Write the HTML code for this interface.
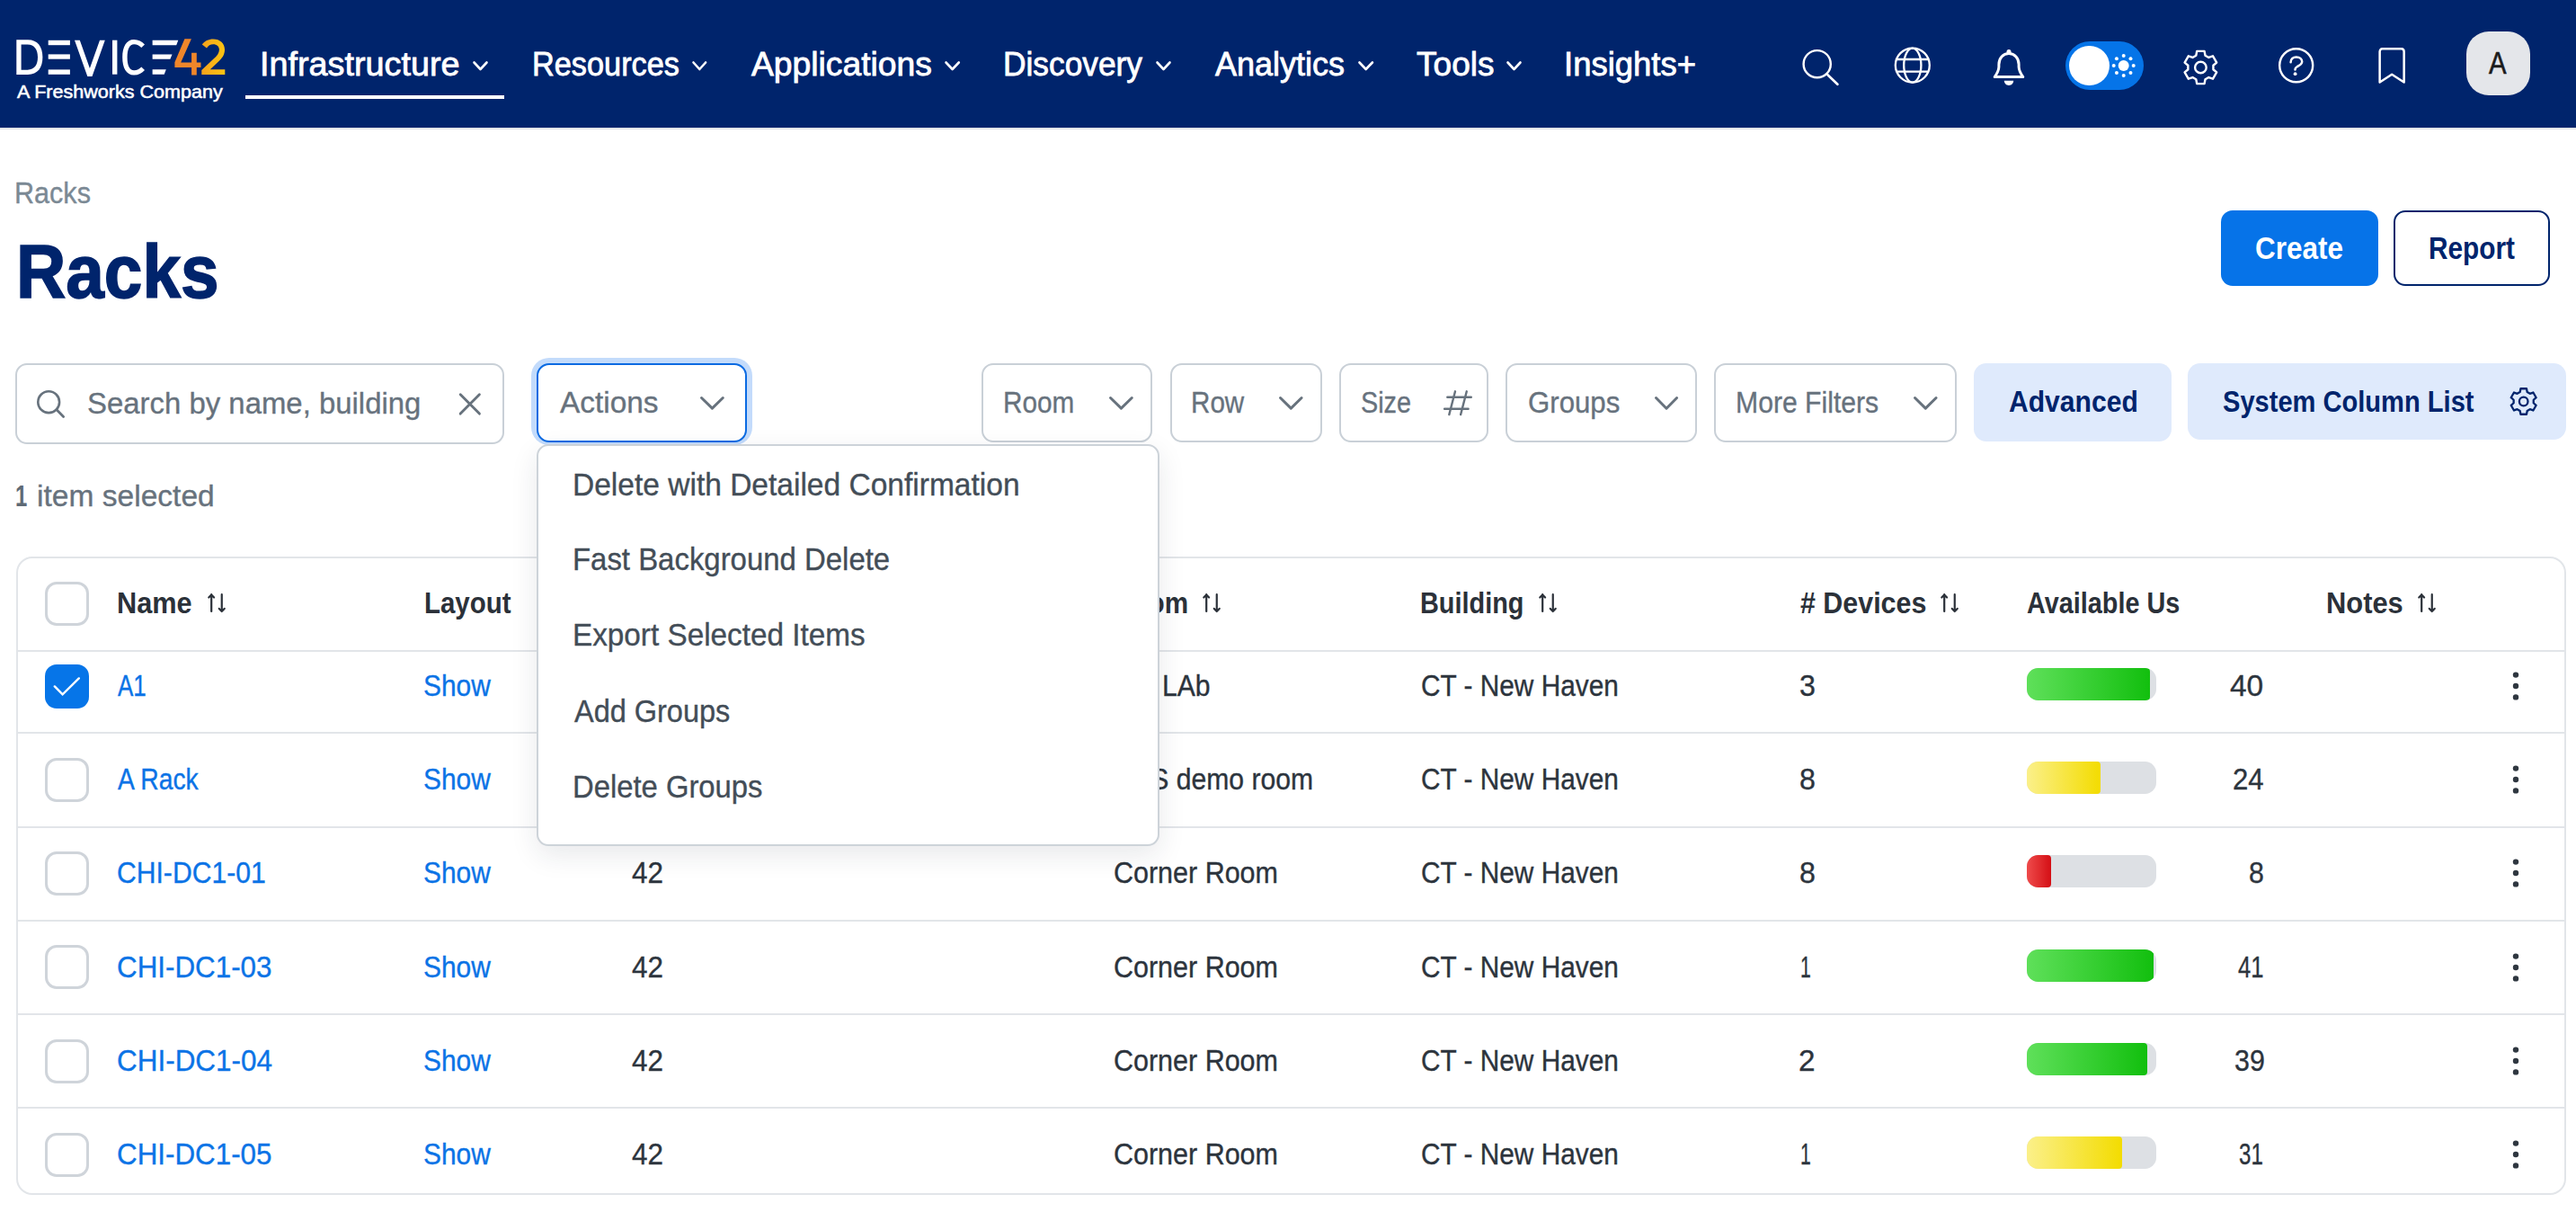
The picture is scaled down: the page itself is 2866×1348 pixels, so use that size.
<!DOCTYPE html><html><head><meta charset="utf-8"><style>
html,body{margin:0;padding:0;}
body{width:2866px;height:1348px;position:relative;overflow:hidden;background:#fff;font-family:"Liberation Sans",sans-serif;}
.t{position:absolute;line-height:0;white-space:nowrap;transform-origin:0 0;}
.a{position:absolute;box-sizing:border-box;}
svg{position:absolute;overflow:visible;}
</style></head><body>
<div class="a" style="left:0;top:0;width:2866px;height:142px;background:#00246c"></div>
<div class="a" style="left:0;top:142px;width:2866px;height:2.2px;background:#e2e5e9"></div>
<svg style="left:0;top:0" width="300" height="141" viewBox="0 0 300 141">
<defs><linearGradient id="g2" x1="0" x2="1" y1="0" y2="0"><stop offset="0" stop-color="#f7a21c"/><stop offset="1" stop-color="#fbc312"/></linearGradient></defs>
<g fill="#fff">
<path d="M18.3 44.2 H31 C42 44.2 47.4 52 47.4 63.6 C47.4 75.4 42 83 31 83 H18.3 Z M23.6 49.5 V77.7 H30.6 C38.4 77.7 42 72 42 63.6 C42 55.2 38.4 49.5 30.6 49.5 Z"/>
<rect x="53.7" y="44.8" width="24.2" height="5.4"/>
<rect x="53.7" y="60.4" width="24.2" height="5.3"/>
<rect x="53.7" y="77.4" width="24.2" height="5.4"/>
<path d="M83 44.7 H88.8 L99.9 76 L111 44.7 H116.8 L102.5 85 H97.3 Z"/>
<rect x="125" y="44.7" width="5.4" height="38"/>
<path d="M161 49.5 C158 46 154 43.9 149 43.9 C140.5 43.9 136.2 52 136.2 63.7 C136.2 75.4 140.5 83.5 149 83.5 C154 83.5 158 81.5 161 78 L157.3 74.4 C155 76.8 152.5 78.2 149.2 78.2 C144 78.2 141.6 72.5 141.6 63.7 C141.6 54.9 144 49.2 149.2 49.2 C152.5 49.2 155 50.6 157.3 53 Z"/>
<path d="M169.6 44.8 H198.3 L196.2 50.2 H169.6 Z"/>
<path d="M169.6 60.4 H191.5 L189.4 65.7 H169.6 Z"/>
<path d="M169.6 77.3 H184.8 L182.7 82.7 H169.6 Z"/>
</g>
<path fill="#f0862a" d="M205.4 43.2 H212.9 L201.2 69.5 H213.1 V58.8 H218.8 V69.5 H223.5 V74.9 H218.8 V83.5 H213.1 V74.9 H194.4 V69.3 Z"/>
<path fill="url(#g2)" d="M224.8 49.6 C227.5 45.5 231.8 43.4 237.2 43.4 C245 43.4 250 48.2 250 55.3 C250 60.8 247.4 64.7 242 69.6 L233.8 77.2 H250.3 V83 H224.3 V78 L237.3 65.8 C241.4 62 243.9 59 243.9 55.4 C243.9 51.6 241.2 49.2 237.2 49.2 C234.1 49.2 231.6 50.7 230 53.6 Z"/>
</svg>
<div class="t" style="left:19.20px;top:102.25px;font-size:19.48px;font-weight:400;color:#ffffff;transform:scaleX(1.1068);-webkit-text-stroke:0.5px #fff">A Freshworks Company</div>
<div class="t" style="left:289.05px;top:72.30px;font-size:36.63px;font-weight:400;color:#ffffff;transform:scaleX(1.0311);-webkit-text-stroke:0.8px #fff">Infrastructure</div>
<svg style="left:526px;top:68px" width="17" height="11" viewBox="0 0 17 11"><path d="M1.5 1.5 L8.5 9 L15.5 1.5" fill="none" stroke="#fff" stroke-width="2.6" stroke-linecap="round" stroke-linejoin="round"/></svg>
<div class="t" style="left:592.12px;top:72.30px;font-size:36.63px;font-weight:400;color:#ffffff;transform:scaleX(0.9365);-webkit-text-stroke:0.8px #fff">Resources</div>
<svg style="left:770px;top:68px" width="16.600000000000023" height="11" viewBox="0 0 16.600000000000023 11"><path d="M1.5 1.5 L8.300000000000011 9 L15.100000000000023 1.5" fill="none" stroke="#fff" stroke-width="2.6" stroke-linecap="round" stroke-linejoin="round"/></svg>
<div class="t" style="left:836.00px;top:72.30px;font-size:36.63px;font-weight:400;color:#ffffff;transform:scaleX(1.0175);-webkit-text-stroke:0.8px #fff">Applications</div>
<svg style="left:1050.7px;top:68px" width="17.299999999999955" height="11" viewBox="0 0 17.299999999999955 11"><path d="M1.5 1.5 L8.649999999999977 9 L15.799999999999955 1.5" fill="none" stroke="#fff" stroke-width="2.6" stroke-linecap="round" stroke-linejoin="round"/></svg>
<div class="t" style="left:1115.84px;top:72.30px;font-size:36.63px;font-weight:400;color:#ffffff;transform:scaleX(0.9638);-webkit-text-stroke:0.8px #fff">Discovery</div>
<svg style="left:1286px;top:68px" width="17" height="11" viewBox="0 0 17 11"><path d="M1.5 1.5 L8.5 9 L15.5 1.5" fill="none" stroke="#fff" stroke-width="2.6" stroke-linecap="round" stroke-linejoin="round"/></svg>
<div class="t" style="left:1352.00px;top:72.30px;font-size:36.63px;font-weight:400;color:#ffffff;transform:scaleX(0.9834);-webkit-text-stroke:0.8px #fff">Analytics</div>
<svg style="left:1510.6px;top:68px" width="17.40000000000009" height="11" viewBox="0 0 17.40000000000009 11"><path d="M1.5 1.5 L8.700000000000045 9 L15.900000000000091 1.5" fill="none" stroke="#fff" stroke-width="2.6" stroke-linecap="round" stroke-linejoin="round"/></svg>
<div class="t" style="left:1576.12px;top:72.30px;font-size:36.63px;font-weight:400;color:#ffffff;transform:scaleX(1.0121);-webkit-text-stroke:0.8px #fff">Tools</div>
<svg style="left:1676px;top:68px" width="17" height="11" viewBox="0 0 17 11"><path d="M1.5 1.5 L8.5 9 L15.5 1.5" fill="none" stroke="#fff" stroke-width="2.6" stroke-linecap="round" stroke-linejoin="round"/></svg>
<div class="t" style="left:1740.05px;top:72.30px;font-size:36.63px;font-weight:400;color:#ffffff;transform:scaleX(0.9958);-webkit-text-stroke:0.8px #fff">Insights+</div>
<div class="a" style="left:273px;top:106px;width:288px;height:4px;background:#fff"></div>
<svg style="left:2000px;top:50px" width="50" height="50" viewBox="0 0 50 50"><circle cx="21.7" cy="21.2" r="15.1" fill="none" stroke="#fff" stroke-width="2.4"/><path d="M32.6 32.4 L44.4 43.8" stroke="#fff" stroke-width="2.6" stroke-linecap="round"/></svg>
<svg style="left:2100px;top:50px" width="56" height="50" viewBox="0 0 56 50"><g fill="none" stroke="#fff" stroke-width="2.3"><circle cx="27.8" cy="22.6" r="19"/><ellipse cx="27.8" cy="22.6" rx="9.6" ry="19"/><path d="M10.5 16 H45 M10.5 29.7 H45"/></g></svg>
<svg style="left:2210px;top:50px" width="50" height="50" viewBox="0 0 50 50"><path d="M9.2 35.6 H40.8 C37.6 31.2 36.3 28.2 36.1 24.5 V21.8 C36.1 14.6 31.4 9.6 25 9.6 C18.6 9.6 13.9 14.6 13.9 21.8 V24.5 C13.7 28.2 12.4 31.2 9.2 35.6 Z" fill="none" stroke="#fff" stroke-width="3" stroke-linejoin="round"/><circle cx="25" cy="7.4" r="2.5" fill="#fff"/><path d="M19.8 39.8 H30.2 C30 43 27.8 45 25 45 C22.2 45 20 43 19.8 39.8 Z" fill="#fff"/></svg>
<div class="a" style="left:2298px;top:46px;width:87px;height:54px;border-radius:27px;background:#0574e8"></div>
<div class="a" style="left:2302px;top:50.8px;width:44.6px;height:44.6px;border-radius:50%;background:#fff"></div>
<svg style="left:2340px;top:50px" width="46" height="46" viewBox="0 0 46 46"><g fill="#fff"><circle cx="22.7" cy="23.1" r="6"/><circle cx="33.70" cy="23.10" r="2"/><circle cx="30.48" cy="30.88" r="2"/><circle cx="22.70" cy="34.10" r="2"/><circle cx="14.92" cy="30.88" r="2"/><circle cx="11.70" cy="23.10" r="2"/><circle cx="14.92" cy="15.32" r="2"/><circle cx="22.70" cy="12.10" r="2"/><circle cx="30.48" cy="15.32" r="2"/></g></svg>
<svg style="left:2420px;top:50px" width="56" height="50" viewBox="0 0 56 50"><g fill="none" stroke="#fff" stroke-width="2.4" stroke-linejoin="round"><path d="M23.31 11.74 L24.22 6.88 L32.58 6.88 L33.49 11.74 L37.34 13.96 L42.00 12.31 L46.19 19.56 L42.43 22.78 L42.43 27.22 L46.19 30.44 L42.00 37.69 L37.34 36.04 L33.49 38.26 L32.58 43.12 L24.22 43.12 L23.31 38.26 L19.46 36.04 L14.80 37.69 L10.61 30.44 L14.37 27.22 L14.37 22.78 L10.61 19.56 L14.80 12.31 L19.46 13.96 Z"/><circle cx="28.4" cy="25" r="6.3"/></g></svg>
<svg style="left:2530px;top:50px" width="50" height="50" viewBox="0 0 50 50"><circle cx="24.7" cy="22.8" r="18.5" fill="none" stroke="#fff" stroke-width="2.4"/><path d="M18.6 19.2 C18.6 15.5 21.3 13.4 24.8 13.4 C28.6 13.4 31.2 15.6 31.2 18.6 C31.2 21.6 28.6 22.8 26 24 C24.2 24.9 23.5 25.8 23.5 27.6" fill="none" stroke="#fff" stroke-width="2.5" stroke-linecap="round"/><circle cx="23.6" cy="32.2" r="1.9" fill="#fff"/></svg>
<svg style="left:2640px;top:50px" width="44" height="50" viewBox="0 0 44 50"><path d="M7.65 41.5 V7.6 C7.65 5.6 8.6 4.35 10.6 4.35 H31.7 C33.7 4.35 34.65 5.6 34.65 7.6 V41.5 L21.15 32.8 Z" fill="none" stroke="#fff" stroke-width="2.5" stroke-linejoin="round"/></svg>
<div class="a" style="left:2744px;top:35px;width:71px;height:71px;border-radius:25px;background:#e4e6ea"></div>
<div class="t" style="left:2768.50px;top:70.20px;font-size:35.76px;font-weight:400;color:#1b1b1b;transform:scaleX(0.8200);-webkit-text-stroke:0.6px #1b1b1b">A</div>
<div class="t" style="left:16.01px;top:215.41px;font-size:33.43px;font-weight:400;color:#7b8994;transform:scaleX(0.9146);-webkit-text-stroke:0.35px #7b8994">Racks</div>
<div class="t" style="left:18.32px;top:302.27px;font-size:83.43px;font-weight:700;color:#00246c;transform:scaleX(0.9176);-webkit-text-stroke:1.6px #00246c">Racks</div>
<div class="a" style="left:2471px;top:234px;width:175px;height:84px;border-radius:13px;background:#0673e8"></div>
<div class="t" style="left:2508.82px;top:275.61px;font-size:34.88px;font-weight:700;color:#ffffff;transform:scaleX(0.9022)">Create</div>
<div class="a" style="left:2663px;top:234px;width:174px;height:84px;border-radius:13px;border:2.2px solid #00246c;background:#fff"></div>
<div class="t" style="left:2702.14px;top:275.61px;font-size:34.88px;font-weight:700;color:#00246c;transform:scaleX(0.8542)">Report</div>
<div class="a" style="left:17.4px;top:404px;width:544px;height:89.5px;border-radius:13px;border:2px solid #c9d0d7;background:#fff"></div>
<svg style="left:36px;top:428px" width="40" height="40" viewBox="0 0 40 40"><circle cx="18.2" cy="19.2" r="11.9" fill="none" stroke="#67727d" stroke-width="2.6"/><path d="M26.8 27.6 L34.6 35.4" stroke="#67727d" stroke-width="2.8" stroke-linecap="round"/></svg>
<div class="t" style="left:96.77px;top:448.26px;font-size:33.87px;font-weight:400;color:#67727d;transform:scaleX(0.9720);-webkit-text-stroke:0.35px #67727d">Search by name, building</div>
<svg style="left:505px;top:432px" width="36" height="36" viewBox="0 0 36 36"><path d="M7.2 6.8 L28.4 28.1 M28.4 6.8 L7.2 28.1" stroke="#67727d" stroke-width="2.9" stroke-linecap="round"/></svg>
<div class="a" style="left:591px;top:398px;width:246px;height:97px;border-radius:20px;background:#c3dbfb"></div>
<div class="a" style="left:597px;top:404px;width:234px;height:88px;border-radius:14px;border:2.2px solid #0a6ae2;background:#fff"></div>
<div class="t" style="left:623.30px;top:448.46px;font-size:33.28px;font-weight:400;color:#67727d;transform:scaleX(1.0036);-webkit-text-stroke:0.35px #67727d">Actions</div>
<svg style="left:779.2px;top:440.9px" width="26.8" height="14.7" viewBox="0 0 26.8 14.7"><path d="M1.50 1.50 L13.40 13.20 L25.30 1.50" fill="none" stroke="#67727d" stroke-width="3" stroke-linecap="round" stroke-linejoin="round"/></svg>
<div class="a" style="left:1092.4px;top:404.1px;width:190.1px;height:87.5px;border-radius:13px;border:2px solid #c9d0d7;background:#fff"></div>
<div class="t" style="left:1116.48px;top:447.66px;font-size:33.28px;font-weight:400;color:#67727d;transform:scaleX(0.8939);-webkit-text-stroke:0.35px #67727d">Room</div>
<svg style="left:1234.0px;top:440.9px" width="26.8" height="14.7" viewBox="0 0 26.8 14.7"><path d="M1.50 1.50 L13.40 13.20 L25.30 1.50" fill="none" stroke="#67727d" stroke-width="3" stroke-linecap="round" stroke-linejoin="round"/></svg>
<div class="a" style="left:1301.6px;top:404.1px;width:169.7px;height:87.5px;border-radius:13px;border:2px solid #c9d0d7;background:#fff"></div>
<div class="t" style="left:1324.99px;top:447.66px;font-size:33.28px;font-weight:400;color:#67727d;transform:scaleX(0.8899);-webkit-text-stroke:0.35px #67727d">Row</div>
<svg style="left:1423.2px;top:440.9px" width="26.6" height="14.7" viewBox="0 0 26.6 14.7"><path d="M1.50 1.50 L13.30 13.20 L25.10 1.50" fill="none" stroke="#67727d" stroke-width="3" stroke-linecap="round" stroke-linejoin="round"/></svg>
<div class="a" style="left:1490.3px;top:404.1px;width:166.0px;height:87.5px;border-radius:13px;border:2px solid #c9d0d7;background:#fff"></div>
<div class="t" style="left:1514.10px;top:447.66px;font-size:33.28px;font-weight:400;color:#67727d;transform:scaleX(0.8659);-webkit-text-stroke:0.35px #67727d">Size</div>
<div class="a" style="left:1675.4px;top:404.1px;width:212.6px;height:87.5px;border-radius:13px;border:2px solid #c9d0d7;background:#fff"></div>
<div class="t" style="left:1699.54px;top:447.66px;font-size:33.28px;font-weight:400;color:#67727d;transform:scaleX(0.9376);-webkit-text-stroke:0.35px #67727d">Groups</div>
<svg style="left:1840.6px;top:440.9px" width="26.1" height="14.7" viewBox="0 0 26.1 14.7"><path d="M1.50 1.50 L13.05 13.20 L24.60 1.50" fill="none" stroke="#67727d" stroke-width="3" stroke-linecap="round" stroke-linejoin="round"/></svg>
<div class="a" style="left:1906.7px;top:404.1px;width:270.6px;height:87.5px;border-radius:13px;border:2px solid #c9d0d7;background:#fff"></div>
<div class="t" style="left:1930.94px;top:447.66px;font-size:33.28px;font-weight:400;color:#67727d;transform:scaleX(0.9067);-webkit-text-stroke:0.35px #67727d">More Filters</div>
<svg style="left:2129.0px;top:440.9px" width="26.6" height="14.7" viewBox="0 0 26.6 14.7"><path d="M1.50 1.50 L13.30 13.20 L25.10 1.50" fill="none" stroke="#67727d" stroke-width="3" stroke-linecap="round" stroke-linejoin="round"/></svg>
<svg style="left:1604px;top:432px" width="36" height="34" viewBox="0 0 36 34"><path d="M6.3 9.8 H32.8 M3.1 22.7 H29.6 M15 3.3 L8.3 29.1 M27.8 3.3 L21.1 29.1" stroke="#67727d" stroke-width="2.4" stroke-linecap="round"/></svg>
<div class="a" style="left:2196px;top:404px;width:220px;height:87px;border-radius:14px;background:#dfeafc"></div>
<div class="t" style="left:2234.53px;top:446.56px;font-size:32.99px;font-weight:700;color:#00246c;transform:scaleX(0.9125)">Advanced</div>
<div class="a" style="left:2434.3px;top:404px;width:420.7px;height:85px;border-radius:14px;background:#dfeafc"></div>
<div class="t" style="left:2472.55px;top:446.56px;font-size:32.99px;font-weight:700;color:#00246c;transform:scaleX(0.8815)">System Column List</div>
<svg style="left:2790px;top:428px" width="36" height="36" viewBox="0 0 36 36"><g fill="none" stroke="#00246c" stroke-width="2.3" stroke-linejoin="round"><path d="M13.69 8.04 L14.42 4.27 L20.98 4.27 L21.71 8.04 L24.75 9.80 L28.38 8.54 L31.66 14.23 L28.76 16.75 L28.76 20.25 L31.66 22.77 L28.38 28.46 L24.75 27.20 L21.71 28.96 L20.98 32.73 L14.42 32.73 L13.69 28.96 L10.65 27.20 L7.02 28.46 L3.74 22.77 L6.64 20.25 L6.64 16.75 L3.74 14.23 L7.02 8.54 L10.65 9.80 Z"/><circle cx="17.7" cy="18.5" r="4.8"/></g></svg>
<div class="t" style="left:16.91px;top:552.41px;font-size:33.43px;font-weight:700;color:#5f6a75;transform:scaleX(0.7147)">1</div>
<div class="t" style="left:41.00px;top:552.41px;font-size:33.43px;font-weight:400;color:#67727d;transform:scaleX(1.0042);-webkit-text-stroke:0.35px #67727d">item selected</div>
<div class="a" style="left:17.8px;top:618.6px;width:2837px;height:710px;border-radius:18px;border:2px solid #e2e5e9;background:#fff"></div>
<div class="a" style="left:19px;top:722.5px;width:2834px;height:2px;background:#e2e5e9"></div>
<div class="a" style="left:19px;top:813.6px;width:2834px;height:2px;background:#e2e5e9"></div>
<div class="a" style="left:19px;top:918.5px;width:2834px;height:2px;background:#e2e5e9"></div>
<div class="a" style="left:19px;top:1022.5px;width:2834px;height:2px;background:#e2e5e9"></div>
<div class="a" style="left:19px;top:1126.9px;width:2834px;height:2px;background:#e2e5e9"></div>
<div class="a" style="left:19px;top:1231.0px;width:2834px;height:2px;background:#e2e5e9"></div>
<div class="a" style="left:50.1px;top:647px;width:49px;height:49px;border-radius:13px;border:3.4px solid #cfd4da;background:#fff"></div>
<div class="t" style="left:130.48px;top:670.61px;font-size:32.56px;font-weight:700;color:#2b3139;transform:scaleX(0.9437)">Name</div>
<svg style="left:230.2px;top:659.7px" width="23" height="22" viewBox="0 0 23 22"><g fill="none" stroke="#2b3139" stroke-width="2.2" stroke-linecap="round" stroke-linejoin="round"><path d="M5.2 20 V1.2 M2.3 4.5 L5.2 1.4 L8.1 4.5"/><path d="M16.75 1.2 V20 M13.8 16.9 L16.75 20 L19.7 16.9"/></g></svg>
<div class="t" style="left:471.56px;top:670.61px;font-size:32.56px;font-weight:700;color:#2b3139;transform:scaleX(0.9050)">Layout</div>
<div class="t" style="left:702.74px;top:670.61px;font-size:32.56px;font-weight:700;color:#2b3139;transform:scaleX(0.9000)">Size</div>
<div class="t" style="left:1238.14px;top:670.61px;font-size:32.56px;font-weight:700;color:#2b3139;transform:scaleX(0.9125)">Room</div>
<svg style="left:1336.6px;top:659.7px" width="23" height="22" viewBox="0 0 23 22"><g fill="none" stroke="#2b3139" stroke-width="2.2" stroke-linecap="round" stroke-linejoin="round"><path d="M5.2 20 V1.2 M2.3 4.5 L5.2 1.4 L8.1 4.5"/><path d="M16.75 1.2 V20 M13.8 16.9 L16.75 20 L19.7 16.9"/></g></svg>
<div class="t" style="left:1580.20px;top:670.61px;font-size:32.56px;font-weight:700;color:#2b3139;transform:scaleX(0.8867)">Building</div>
<svg style="left:1710.9px;top:659.7px" width="23" height="22" viewBox="0 0 23 22"><g fill="none" stroke="#2b3139" stroke-width="2.2" stroke-linecap="round" stroke-linejoin="round"><path d="M5.2 20 V1.2 M2.3 4.5 L5.2 1.4 L8.1 4.5"/><path d="M16.75 1.2 V20 M13.8 16.9 L16.75 20 L19.7 16.9"/></g></svg>
<div class="t" style="left:2002.82px;top:670.61px;font-size:32.56px;font-weight:700;color:#2b3139;transform:scaleX(0.9345)"># Devices</div>
<svg style="left:2158.0px;top:659.7px" width="23" height="22" viewBox="0 0 23 22"><g fill="none" stroke="#2b3139" stroke-width="2.2" stroke-linecap="round" stroke-linejoin="round"><path d="M5.2 20 V1.2 M2.3 4.5 L5.2 1.4 L8.1 4.5"/><path d="M16.75 1.2 V20 M13.8 16.9 L16.75 20 L19.7 16.9"/></g></svg>
<div class="t" style="left:2254.55px;top:670.61px;font-size:32.56px;font-weight:700;color:#2b3139;transform:scaleX(0.8851)">Available Us</div>
<div class="t" style="left:2588.07px;top:670.61px;font-size:32.56px;font-weight:700;color:#2b3139;transform:scaleX(0.9483)">Notes</div>
<svg style="left:2689.0px;top:659.7px" width="23" height="22" viewBox="0 0 23 22"><g fill="none" stroke="#2b3139" stroke-width="2.2" stroke-linecap="round" stroke-linejoin="round"><path d="M5.2 20 V1.2 M2.3 4.5 L5.2 1.4 L8.1 4.5"/><path d="M16.75 1.2 V20 M13.8 16.9 L16.75 20 L19.7 16.9"/></g></svg>
<div class="a" style="left:50.1px;top:738.7px;width:49px;height:49px;border-radius:13px;background:#0675e8"></div><svg style="left:50.1px;top:738.7px" width="49" height="49" viewBox="0 0 49 49"><path d="M10.8 24.4 L19.6 33.4 L37.8 15.4" fill="none" stroke="#fff" stroke-width="2.4" stroke-linecap="round" stroke-linejoin="miter"/></svg>
<div class="t" style="left:131.20px;top:763.21px;font-size:32.56px;font-weight:400;color:#0b73e6;transform:scaleX(0.7999);-webkit-text-stroke:0.35px #0b73e6">A1</div>
<div class="t" style="left:471.26px;top:763.21px;font-size:32.56px;font-weight:400;color:#0b73e6;transform:scaleX(0.9193);-webkit-text-stroke:0.35px #0b73e6">Show</div>
<div class="t" style="left:702.71px;top:763.21px;font-size:32.56px;font-weight:400;color:#2c343d;transform:scaleX(0.9655);-webkit-text-stroke:0.35px #2c343d">42</div>
<div class="t" style="left:1292.58px;top:763.21px;font-size:32.56px;font-weight:400;color:#2c343d;transform:scaleX(0.9260);-webkit-text-stroke:0.35px #2c343d">LAb</div>
<div class="t" style="left:1580.60px;top:763.21px;font-size:32.56px;font-weight:400;color:#2c343d;transform:scaleX(0.9163);-webkit-text-stroke:0.35px #2c343d">CT - New Haven</div>
<div class="t" style="left:2001.69px;top:763.21px;font-size:32.56px;font-weight:400;color:#2c343d;transform:scaleX(0.9892);-webkit-text-stroke:0.35px #2c343d">3</div>
<div class="a" style="left:2255px;top:743.0px;width:144px;height:36px;border-radius:12.5px;background:#dde0e4;overflow:hidden"><div style="width:137.1px;height:36px;border-radius:0 4px 4px 0;background:linear-gradient(90deg,#5fe05a,#12bf0e)"></div></div>
<div class="t" style="left:2481.48px;top:763.21px;font-size:32.56px;font-weight:400;color:#2c343d;transform:scaleX(1.0288);-webkit-text-stroke:0.35px #2c343d">40</div>
<svg style="left:2790px;top:743.0px" width="18" height="40" viewBox="0 0 18 40"><g fill="#2f3740"><circle cx="9" cy="7.6" r="3.2"/><circle cx="9" cy="20" r="3.2"/><circle cx="9" cy="32.4" r="3.2"/></g></svg>
<div class="a" style="left:50.1px;top:842.7px;width:49px;height:49px;border-radius:13px;border:3.4px solid #cfd4da;background:#fff"></div>
<div class="t" style="left:131.20px;top:867.21px;font-size:32.56px;font-weight:400;color:#0b73e6;transform:scaleX(0.8706);-webkit-text-stroke:0.35px #0b73e6">A Rack</div>
<div class="t" style="left:471.26px;top:867.21px;font-size:32.56px;font-weight:400;color:#0b73e6;transform:scaleX(0.9193);-webkit-text-stroke:0.35px #0b73e6">Show</div>
<div class="t" style="left:702.71px;top:867.21px;font-size:32.56px;font-weight:400;color:#2c343d;transform:scaleX(0.9655);-webkit-text-stroke:0.35px #2c343d">42</div>
<div class="t" style="left:1234.67px;top:867.21px;font-size:32.56px;font-weight:400;color:#2c343d;transform:scaleX(0.9260);-webkit-text-stroke:0.35px #2c343d">VMS demo room</div>
<div class="t" style="left:1580.60px;top:867.21px;font-size:32.56px;font-weight:400;color:#2c343d;transform:scaleX(0.9163);-webkit-text-stroke:0.35px #2c343d">CT - New Haven</div>
<div class="t" style="left:2001.69px;top:867.21px;font-size:32.56px;font-weight:400;color:#2c343d;transform:scaleX(0.9892);-webkit-text-stroke:0.35px #2c343d">8</div>
<div class="a" style="left:2255px;top:847.0px;width:144px;height:36px;border-radius:12.5px;background:#dde0e4;overflow:hidden"><div style="width:82.3px;height:36px;border-radius:0 4px 4px 0;background:linear-gradient(90deg,#fbf08a,#f3dc00)"></div></div>
<div class="t" style="left:2484.04px;top:867.21px;font-size:32.56px;font-weight:400;color:#2c343d;transform:scaleX(0.9564);-webkit-text-stroke:0.35px #2c343d">24</div>
<svg style="left:2790px;top:847.0px" width="18" height="40" viewBox="0 0 18 40"><g fill="#2f3740"><circle cx="9" cy="7.6" r="3.2"/><circle cx="9" cy="20" r="3.2"/><circle cx="9" cy="32.4" r="3.2"/></g></svg>
<div class="a" style="left:50.1px;top:946.7px;width:49px;height:49px;border-radius:13px;border:3.4px solid #cfd4da;background:#fff"></div>
<div class="t" style="left:129.79px;top:971.21px;font-size:32.56px;font-weight:400;color:#0b73e6;transform:scaleX(0.9254);-webkit-text-stroke:0.35px #0b73e6">CHI-DC1-01</div>
<div class="t" style="left:471.26px;top:971.21px;font-size:32.56px;font-weight:400;color:#0b73e6;transform:scaleX(0.9193);-webkit-text-stroke:0.35px #0b73e6">Show</div>
<div class="t" style="left:702.71px;top:971.21px;font-size:32.56px;font-weight:400;color:#2c343d;transform:scaleX(0.9655);-webkit-text-stroke:0.35px #2c343d">42</div>
<div class="t" style="left:1238.57px;top:971.21px;font-size:32.56px;font-weight:400;color:#2c343d;transform:scaleX(0.9365);-webkit-text-stroke:0.35px #2c343d">Corner Room</div>
<div class="t" style="left:1580.60px;top:971.21px;font-size:32.56px;font-weight:400;color:#2c343d;transform:scaleX(0.9163);-webkit-text-stroke:0.35px #2c343d">CT - New Haven</div>
<div class="t" style="left:2001.69px;top:971.21px;font-size:32.56px;font-weight:400;color:#2c343d;transform:scaleX(0.9892);-webkit-text-stroke:0.35px #2c343d">8</div>
<div class="a" style="left:2255px;top:951.0px;width:144px;height:36px;border-radius:12.5px;background:#dde0e4;overflow:hidden"><div style="width:27.4px;height:36px;border-radius:0 4px 4px 0;background:linear-gradient(90deg,#ef4b4b,#d40f15)"></div></div>
<div class="t" style="left:2502.25px;top:971.21px;font-size:32.56px;font-weight:400;color:#2c343d;transform:scaleX(0.9321);-webkit-text-stroke:0.35px #2c343d">8</div>
<svg style="left:2790px;top:951.0px" width="18" height="40" viewBox="0 0 18 40"><g fill="#2f3740"><circle cx="9" cy="7.6" r="3.2"/><circle cx="9" cy="20" r="3.2"/><circle cx="9" cy="32.4" r="3.2"/></g></svg>
<div class="a" style="left:50.1px;top:1051.4px;width:49px;height:49px;border-radius:13px;border:3.4px solid #cfd4da;background:#fff"></div>
<div class="t" style="left:129.73px;top:1075.91px;font-size:32.56px;font-weight:400;color:#0b73e6;transform:scaleX(0.9634);-webkit-text-stroke:0.35px #0b73e6">CHI-DC1-03</div>
<div class="t" style="left:471.26px;top:1075.91px;font-size:32.56px;font-weight:400;color:#0b73e6;transform:scaleX(0.9193);-webkit-text-stroke:0.35px #0b73e6">Show</div>
<div class="t" style="left:702.71px;top:1075.91px;font-size:32.56px;font-weight:400;color:#2c343d;transform:scaleX(0.9655);-webkit-text-stroke:0.35px #2c343d">42</div>
<div class="t" style="left:1238.57px;top:1075.91px;font-size:32.56px;font-weight:400;color:#2c343d;transform:scaleX(0.9365);-webkit-text-stroke:0.35px #2c343d">Corner Room</div>
<div class="t" style="left:1580.60px;top:1075.91px;font-size:32.56px;font-weight:400;color:#2c343d;transform:scaleX(0.9163);-webkit-text-stroke:0.35px #2c343d">CT - New Haven</div>
<div class="t" style="left:2002.68px;top:1075.91px;font-size:32.56px;font-weight:400;color:#2c343d;transform:scaleX(0.6507);-webkit-text-stroke:0.35px #2c343d">1</div>
<div class="a" style="left:2255px;top:1055.7px;width:144px;height:36px;border-radius:12.5px;background:#dde0e4;overflow:hidden"><div style="width:140.6px;height:36px;border-radius:0 4px 4px 0;background:linear-gradient(90deg,#5fe05a,#12bf0e)"></div></div>
<div class="t" style="left:2489.60px;top:1075.91px;font-size:32.56px;font-weight:400;color:#2c343d;transform:scaleX(0.7852);-webkit-text-stroke:0.35px #2c343d">41</div>
<svg style="left:2790px;top:1055.7px" width="18" height="40" viewBox="0 0 18 40"><g fill="#2f3740"><circle cx="9" cy="7.6" r="3.2"/><circle cx="9" cy="20" r="3.2"/><circle cx="9" cy="32.4" r="3.2"/></g></svg>
<div class="a" style="left:50.1px;top:1155.7px;width:49px;height:49px;border-radius:13px;border:3.4px solid #cfd4da;background:#fff"></div>
<div class="t" style="left:129.73px;top:1180.21px;font-size:32.56px;font-weight:400;color:#0b73e6;transform:scaleX(0.9663);-webkit-text-stroke:0.35px #0b73e6">CHI-DC1-04</div>
<div class="t" style="left:471.26px;top:1180.21px;font-size:32.56px;font-weight:400;color:#0b73e6;transform:scaleX(0.9193);-webkit-text-stroke:0.35px #0b73e6">Show</div>
<div class="t" style="left:702.71px;top:1180.21px;font-size:32.56px;font-weight:400;color:#2c343d;transform:scaleX(0.9655);-webkit-text-stroke:0.35px #2c343d">42</div>
<div class="t" style="left:1238.57px;top:1180.21px;font-size:32.56px;font-weight:400;color:#2c343d;transform:scaleX(0.9365);-webkit-text-stroke:0.35px #2c343d">Corner Room</div>
<div class="t" style="left:1580.60px;top:1180.21px;font-size:32.56px;font-weight:400;color:#2c343d;transform:scaleX(0.9163);-webkit-text-stroke:0.35px #2c343d">CT - New Haven</div>
<div class="t" style="left:2001.14px;top:1180.21px;font-size:32.56px;font-weight:400;color:#2c343d;transform:scaleX(1.0222);-webkit-text-stroke:0.35px #2c343d">2</div>
<div class="a" style="left:2255px;top:1160.0px;width:144px;height:36px;border-radius:12.5px;background:#dde0e4;overflow:hidden"><div style="width:133.7px;height:36px;border-radius:0 4px 4px 0;background:linear-gradient(90deg,#5fe05a,#12bf0e)"></div></div>
<div class="t" style="left:2485.55px;top:1180.21px;font-size:32.56px;font-weight:400;color:#2c343d;transform:scaleX(0.9328);-webkit-text-stroke:0.35px #2c343d">39</div>
<svg style="left:2790px;top:1160.0px" width="18" height="40" viewBox="0 0 18 40"><g fill="#2f3740"><circle cx="9" cy="7.6" r="3.2"/><circle cx="9" cy="20" r="3.2"/><circle cx="9" cy="32.4" r="3.2"/></g></svg>
<div class="a" style="left:50.1px;top:1259.9px;width:49px;height:49px;border-radius:13px;border:3.4px solid #cfd4da;background:#fff"></div>
<div class="t" style="left:129.73px;top:1284.41px;font-size:32.56px;font-weight:400;color:#0b73e6;transform:scaleX(0.9634);-webkit-text-stroke:0.35px #0b73e6">CHI-DC1-05</div>
<div class="t" style="left:471.26px;top:1284.41px;font-size:32.56px;font-weight:400;color:#0b73e6;transform:scaleX(0.9193);-webkit-text-stroke:0.35px #0b73e6">Show</div>
<div class="t" style="left:702.71px;top:1284.41px;font-size:32.56px;font-weight:400;color:#2c343d;transform:scaleX(0.9655);-webkit-text-stroke:0.35px #2c343d">42</div>
<div class="t" style="left:1238.57px;top:1284.41px;font-size:32.56px;font-weight:400;color:#2c343d;transform:scaleX(0.9365);-webkit-text-stroke:0.35px #2c343d">Corner Room</div>
<div class="t" style="left:1580.60px;top:1284.41px;font-size:32.56px;font-weight:400;color:#2c343d;transform:scaleX(0.9163);-webkit-text-stroke:0.35px #2c343d">CT - New Haven</div>
<div class="t" style="left:2002.68px;top:1284.41px;font-size:32.56px;font-weight:400;color:#2c343d;transform:scaleX(0.6507);-webkit-text-stroke:0.35px #2c343d">1</div>
<div class="a" style="left:2255px;top:1264.2px;width:144px;height:36px;border-radius:12.5px;background:#dde0e4;overflow:hidden"><div style="width:106.3px;height:36px;border-radius:0 4px 4px 0;background:linear-gradient(90deg,#fbf08a,#f3dc00)"></div></div>
<div class="t" style="left:2491.15px;top:1284.41px;font-size:32.56px;font-weight:400;color:#2c343d;transform:scaleX(0.7409);-webkit-text-stroke:0.35px #2c343d">31</div>
<svg style="left:2790px;top:1264.2px" width="18" height="40" viewBox="0 0 18 40"><g fill="#2f3740"><circle cx="9" cy="7.6" r="3.2"/><circle cx="9" cy="20" r="3.2"/><circle cx="9" cy="32.4" r="3.2"/></g></svg>
<div class="a" style="left:597.3px;top:493.5px;width:692.5px;height:447.5px;border-radius:13px;border:2px solid #cdd3d9;background:#fff;box-shadow:0 10px 30px rgba(30,40,60,0.10)"></div>
<div class="t" style="left:636.78px;top:538.61px;font-size:34.30px;font-weight:400;color:#434d57;transform:scaleX(0.9775);-webkit-text-stroke:0.35px #434d57">Delete with Detailed Confirmation</div>
<div class="t" style="left:636.83px;top:621.81px;font-size:34.30px;font-weight:400;color:#434d57;transform:scaleX(0.9598);-webkit-text-stroke:0.35px #434d57">Fast Background Delete</div>
<div class="t" style="left:636.80px;top:705.71px;font-size:34.30px;font-weight:400;color:#434d57;transform:scaleX(0.9705);-webkit-text-stroke:0.35px #434d57">Export Selected Items</div>
<div class="t" style="left:639.40px;top:790.91px;font-size:34.30px;font-weight:400;color:#434d57;transform:scaleX(0.9468);-webkit-text-stroke:0.35px #434d57">Add Groups</div>
<div class="t" style="left:636.84px;top:874.81px;font-size:34.30px;font-weight:400;color:#434d57;transform:scaleX(0.9562);-webkit-text-stroke:0.35px #434d57">Delete Groups</div>
</body></html>
